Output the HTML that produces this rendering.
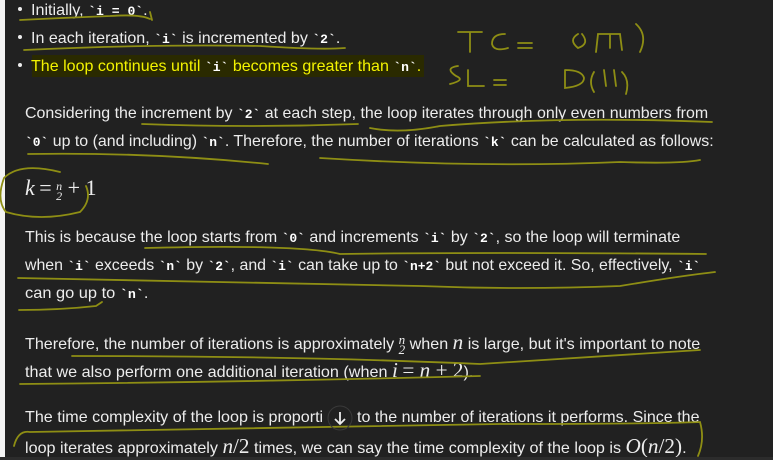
<!DOCTYPE html>
<html><head><meta charset="utf-8"><style>
html,body{margin:0;padding:0}
body{width:773px;height:460px;background:#212121;position:relative;overflow:hidden;font-family:"Liberation Sans",sans-serif;font-size:16px;color:#ececec}
.strip{position:absolute;left:0;top:0;width:5px;height:460px;background:#f4f4f4}
.l{position:absolute;white-space:nowrap;line-height:20px;transform-origin:0 0;transform:scaleX(0.8)}
code{font-family:"Liberation Mono",monospace;font-weight:bold;font-size:13px;color:#fff}
.m{font-family:"Liberation Serif",serif;font-style:italic;font-size:21px}
.s{font-family:"Liberation Serif",serif;font-size:21px}
.fr{display:inline-block;vertical-align:middle;text-align:center;font-family:"Liberation Serif",serif;font-style:italic;font-size:13px;line-height:10px}
.b{position:absolute;width:4px;height:4px;border-radius:2px;background:#ececec}
</style></head><body>
<div class="strip"></div>
<div class="b" style="left:18px;top:7px"></div>
<div class="b" style="left:18px;top:35px"></div>
<div class="b" style="left:18px;top:63px"></div>
<div style="position:absolute;left:32px;top:55px;width:392px;height:22px;background:#2a2a00"></div>
<div class="l" style="left:31px;top:1px">Initially, <code>`i = 0`</code>.</div>
<div class="l" style="left:31px;top:29px">In each iteration, <code>`i`</code> is incremented by <code>`2`</code>.</div>
<div class="l" style="left:31px;top:57px;color:#f3f300">The loop continues until <code>`i`</code> becomes greater than <code>`n`</code>.</div>
<div class="l" style="left:25px;top:104px">Considering the increment by <code>`2`</code> at each step, the loop iterates through only even numbers from</div>
<div class="l" style="left:25px;top:132px"><code>`0`</code> up to (and including) <code>`n`</code>. Therefore, the number of iterations <code>`k`</code> can be calculated as follows:</div>
<div class="l" style="left:25px;top:228px">This is because the loop starts from <code>`0`</code> and increments <code>`i`</code> by <code>`2`</code>, so the loop will terminate</div>
<div class="l" style="left:25px;top:256px">when <code>`i`</code> exceeds <code>`n`</code> by <code>`2`</code>, and <code>`i`</code> can take up to <code>`n+2`</code> but not exceed it. So, effectively, <code>`i`</code></div>
<div class="l" style="left:25px;top:284px">can go up to <code>`n`</code>.</div>
<div class="l" style="left:25px;top:332px">Therefore, the number of iterations is approximately <span class="fr">n<br>2</span> when <span class="m">n</span> is large, but it's important to note</div>
<div class="l" style="left:25px;top:360px">that we also perform one additional iteration (when <span class="m">i</span> <span class="s">= <i>n</i> + 2</span>).</div>
<div class="l" style="left:25px;top:408px">The time complexity of the loop is proporti</div>
<div class="l" style="left:357px;top:408px">to the number of iterations it performs. Since the</div>
<div class="l" style="left:25px;top:436px">loop iterates approximately <span class="m">n</span><span class="s">/2</span> times, we can say the time complexity of the loop is <span class="m">O</span><span class="s">(<i>n</i>/2)</span>.</div>
<div style="position:absolute;left:25px;top:177px;line-height:22px;white-space:nowrap"><span class="m" style="font-size:22px">k</span> <span class="s" style="font-size:22px">=</span> <span class="fr" style="font-size:12px">n<br>2</span><span class="s" style="font-size:22px"> + 1</span></div>
<div style="position:absolute;left:0;top:457px;width:773px;height:3px;background:#2c2c2c"></div>
<svg width="773" height="460" style="position:absolute;left:0;top:0" fill="none" stroke="#8e8e14" stroke-width="1.8" stroke-linecap="round">
<path d="M20 20 Q60 18 110 16 Q140 14 150 19 M150 12 L152 20"/>
<path d="M24 50 Q150 44 260 46 Q320 50 345 48"/>
<path d="M458 32 L482 32 M470 32 L470 52 M505 34 Q492 34 492 44 Q494 52 508 48 M518 43 L532 43 M518 48 L532 48 M578 34 Q568 40 578 48 Q590 44 582 34 M596 52 L598 34 L620 34 L622 50 M610 34 L610 48 M636 24 Q648 35 640 52"/>
<path d="M458 66 Q444 68 456 76 Q466 80 450 84 M468 70 L468 86 L484 86 M494 80 L506 80 M494 85 L506 85 M565 70 L565 88 Q584 86 584 78 Q582 70 565 70 M594 72 Q588 82 594 92 M604 70 L606 86 M614 70 L616 86 M622 72 Q630 80 626 94"/>
<path d="M142 124 Q250 128 358 124 M370 128 Q400 134 440 126 Q560 116 712 122"/>
<path d="M28 154 Q150 152 268 164 M320 158 Q480 168 620 162 Q680 164 700 160"/>
<path d="M60 172 Q20 162 4 178 Q-4 200 6 212 Q40 222 80 212 Q92 200 86 186"/>
<path d="M145 248 Q300 244 340 254 Q480 252 706 254"/>
<path d="M18 278 Q200 282 420 286 Q520 290 620 286 Q680 276 715 272"/>
<path d="M19 310 Q60 310 96 306 L102 302"/>
<path d="M72 356 Q300 356 480 364 Q600 356 700 350"/>
<path d="M20 384 Q250 382 480 376"/>
<path d="M14 446 Q18 430 30 432 Q300 428 500 424 Q650 424 700 422 Q705 440 698 456"/>
</svg>
<svg width="26" height="30" style="position:absolute;left:327px;top:405px" fill="none"><circle cx="13" cy="13" r="12" stroke="#3a3a3a" stroke-width="1"/><path d="M13 7 L13 19 M8 14 L13 19 L18 14" stroke="#ececec" stroke-width="1.8"/></svg>
<script>
(function(){
var W=[117,309,390,683,689,655,675,123,675,448,298,343,662];
var els=document.querySelectorAll('.l');
for(var i=0;i<els.length;i++){var e=els[i];e.style.transform='none';var w=e.offsetWidth;if(w>0)e.style.transform='scaleX('+(W[i]/w)+')';}
})();
</script>
</body></html>
